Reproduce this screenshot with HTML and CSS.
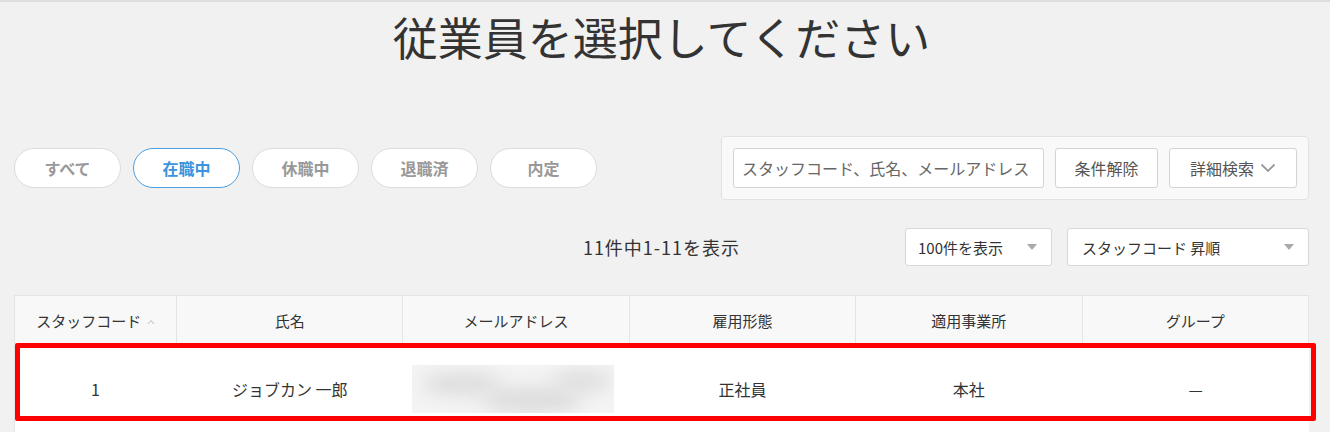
FILE: index.html
```html
<!DOCTYPE html>
<html lang="ja">

<head>
    <meta charset="UTF-8">
    <meta name="viewport" content="width=device-width, initial-scale=1.0">
    <title>従業員を選択</title>
    <link rel="stylesheet" href="styles.css">
</head>

<body>
    <div class="page">
        <h1 class="title">従業員を選択してください</h1>

        <div class="filters">
            <div class="status-tabs">
                <button class="pill">すべて</button>
                <button class="pill active">在職中</button>
                <button class="pill">休職中</button>
                <button class="pill">退職済</button>
                <button class="pill">内定</button>
            </div>
            <div class="search-box">
                <input type="text" class="search-input" placeholder="スタッフコード、氏名、メールアドレス">
                <button class="btn btn-clear">条件解除</button>
                <button class="btn btn-detail">詳細検索
                    <svg width="16" height="10" viewBox="0 0 16 10"><path d="M1.5 1.5 L8 8 L14.5 1.5" fill="none" stroke="#999" stroke-width="1.8"/></svg>
                </button>
            </div>
        </div>

        <div class="result-bar">
            <div></div>
            <div class="count">11件中1-11を表示</div>
            <div class="selects">
                <div class="select per-page">100件を表示 <span class="caret"></span></div>
                <div class="select sort">スタッフコード 昇順 <span class="caret"></span></div>
            </div>
        </div>

        <div class="table-wrap">
            <table class="staff-table">
                <thead>
                    <tr>
                        <th class="col-code">スタッフコード
                            <svg class="sort-icon" width="8" height="6" viewBox="0 0 8 6"><path d="M1 5 L4 1.5 L7 5" fill="none" stroke="#bbb" stroke-width="1"/></svg>
                        </th>
                        <th>氏名</th>
                        <th>メールアドレス</th>
                        <th>雇用形態</th>
                        <th>適用事業所</th>
                        <th>グループ</th>
                    </tr>
                </thead>
                <tbody>
                    <tr>
                        <td>1</td>
                        <td>ジョブカン 一郎</td>
                        <td><div class="blurred"><span class="blob b1"></span><span class="blob b2"></span><span class="blob b3"></span></div></td>
                        <td>正社員</td>
                        <td>本社</td>
                        <td>—</td>
                    </tr>
                </tbody>
            </table>
            <div class="highlight"></div>
        </div>
    </div>
</body>

</html>
```

FILE: styles.css
```css
body {
    margin: 0;
    background-color: #f1f1f1;
    border-top: 2px solid #dedede;
    font-family: "Noto Sans CJK JP", "Noto Sans", sans-serif;
    color: #333;
}

.page {
    padding: 0 21px 0 14px;
}

.title {
    margin: 0;
    text-align: center;
    font-size: 45px;
    font-weight: 400;
    line-height: 70px;
    color: #333;
}

.filters {
    margin-top: 64px;
    display: flex;
    justify-content: space-between;
    align-items: center;
}

.status-tabs {
    display: flex;
    gap: 12px;
}

.pill {
    width: 107px;
    height: 40px;
    border: 1px solid #dcdcdc;
    border-radius: 20px;
    background-color: white;
    color: #999;
    font-family: inherit;
    font-size: 16px;
    font-weight: 700;
}

.pill.active {
    border-color: #4a9fe0;
    color: #3b94dc;
}

.search-box {
    display: flex;
    gap: 11px;
    padding: 11px;
    background-color: #f9f9f9;
    border: 1px solid #e2e2e2;
    border-radius: 4px;
}

.search-input {
    width: 311px;
    height: 40px;
    box-sizing: border-box;
    padding: 0 8px;
    border: 1px solid #d4d4d4;
    border-radius: 3px;
    font-family: inherit;
    font-size: 16px;
}

.search-input::placeholder {
    color: #666;
}

.btn {
    height: 40px;
    padding: 0 16px;
    border: 1px solid #d4d4d4;
    border-radius: 3px;
    background-color: white;
    color: #555;
    font-family: inherit;
    font-size: 16px;
}

.btn-clear {
    width: 103px;
}

.btn-detail {
    display: flex;
    align-items: center;
    gap: 6px;
    width: 128px;
    justify-content: center;
}

.result-bar {
    margin-top: 28px;
    display: grid;
    grid-template-columns: 1fr auto 1fr;
    align-items: center;
}

.count {
    font-size: 18px;
    letter-spacing: 1px;
    color: #333;
}

.selects {
    display: flex;
    justify-content: flex-end;
    gap: 15px;
}

.select {
    height: 38px;
    box-sizing: border-box;
    display: flex;
    align-items: center;
    justify-content: space-between;
    padding: 0 14px 0 12px;
    background-color: white;
    border: 1px solid #d8d8d8;
    border-radius: 3px;
    font-size: 15px;
    color: #333;
}

.per-page {
    width: 147px;
}

.sort {
    width: 242px;
    padding-left: 14px;
}

.caret {
    width: 0;
    height: 0;
    border-left: 5px solid transparent;
    border-right: 5px solid transparent;
    border-top: 6px solid #aaa;
}

.table-wrap {
    position: relative;
    margin-top: 29px;
}

.staff-table {
    width: 100%;
    border-collapse: collapse;
    table-layout: fixed;
    background-color: white;
}

.staff-table th {
    height: 46px;
    background-color: #f8f8f8;
    border: 1px solid #e4e4e4;
    font-size: 15px;
    font-weight: 400;
    color: #333;
}

.staff-table th.col-code {
    width: 159px;
}

.sort-icon {
    vertical-align: middle;
    margin-left: 2px;
}

.staff-table td {
    height: 88px;
    text-align: center;
    vertical-align: middle;
    font-size: 16px;
    color: #333;
    border-left: 1px solid white;
    padding: 0;
}

.staff-table td:first-child {
    border-left: 1px solid #e4e4e4;
}

.blurred {
    position: relative;
    overflow: hidden;
    width: 202px;
    height: 48px;
    margin-left: 9px;
    background-color: #f4f4f4;
}

.blob {
    position: absolute;
    border-radius: 50%;
    background-color: #dcdcdc;
    filter: blur(9px);
}

.b1 {
    left: 10px;
    top: 8px;
    width: 80px;
    height: 22px;
}

.b2 {
    left: 70px;
    top: 22px;
    width: 100px;
    height: 26px;
}

.b3 {
    left: 140px;
    top: 6px;
    width: 60px;
    height: 20px;
}

.highlight {
    position: absolute;
    left: 1px;
    top: 48px;
    width: 1301px;
    height: 78px;
    box-sizing: border-box;
    border: 5px solid #ff0000;
    border-radius: 2px;
}
```
